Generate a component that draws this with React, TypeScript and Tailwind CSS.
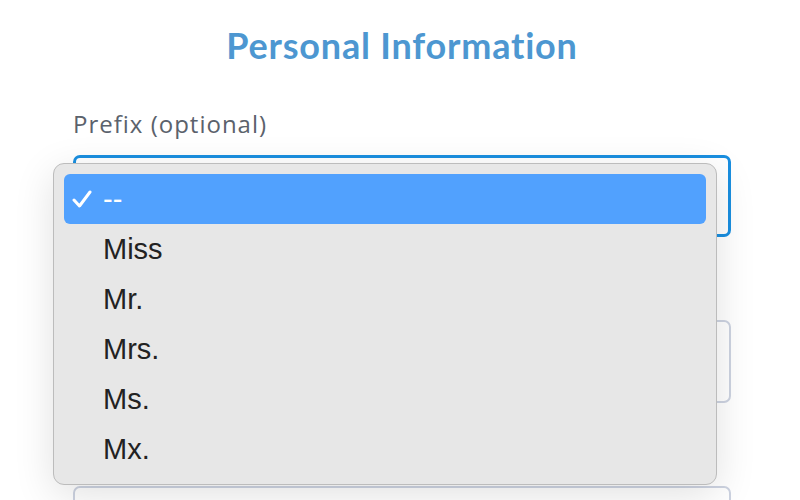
import React from 'react';

const options = ['--', 'Miss', 'Mr.', 'Mrs.', 'Ms.', 'Mx.'];

export default function App() {
  const selected = '--';

  return (
    <div className="relative h-[500px] overflow-hidden bg-white" style={{ fontFamily: 'Lato, "Open Sans", sans-serif' }}>
      <div className="ml-[73px] w-[658px] pt-[22px]">
        <h1 className="text-center text-[36px] font-bold leading-[46px] tracking-[0.8px] text-[#4d97d1]">Personal Information</h1>

        <label className="mt-[41px] block font-['Open_Sans'] text-[24px] leading-[30px] tracking-[1px] text-[#5b626c]">Prefix (optional)</label>

        <div className="mt-[16px] h-[82px] rounded-[7px] border-[3px] border-[#1a8fe0] bg-white" />

        <div className="mt-[83px] h-[83px] rounded-[7px] border-2 border-[#cdd3e1] bg-white" />

        <div className="mt-[83px] h-[83px] rounded-[7px] border-2 border-[#cdd3e1] bg-white" />
      </div>

      {/* native select popup */}
      <div
        className="absolute left-[53px] top-[163px] w-[664px] rounded-[11px] border border-[#bcbcbc] bg-[#e7e7e7] p-[10px] shadow-[0_10px_40px_rgba(0,0,0,0.12)]"
        style={{ fontFamily: '"Liberation Sans", Arial, sans-serif' }}
      >
        {options.map((opt) => {
          const active = opt === selected;
          return (
            <div
              key={opt}
              className={
                'flex h-[50px] items-center rounded-[6px] ' +
                (active ? 'bg-[#51a1fe] text-white' : 'text-[#222222]')
              }
            >
              <span className="flex w-[39px] justify-end pr-[11px]">
                {active && (
                  <svg width="20" height="18" viewBox="0 0 20 18" fill="none">
                    <path d="M2 10 L7.5 16 L18 2" stroke="white" strokeWidth="3" strokeLinecap="round" strokeLinejoin="round" />
                  </svg>
                )}
              </span>
              <span className="text-[29px] leading-none">{opt}</span>
            </div>
          );
        })}
      </div>
    </div>
  );
}
